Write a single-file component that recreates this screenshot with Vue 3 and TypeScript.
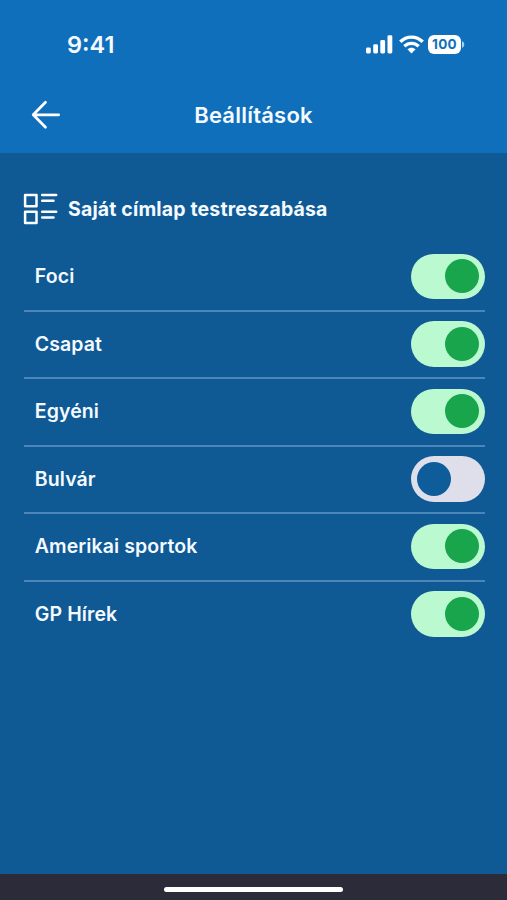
<script setup lang="ts">
import { ref } from 'vue'

interface Topic {
  name: string
  enabled: boolean
}

const topics = ref<Topic[]>([
  { name: 'Foci', enabled: true },
  { name: 'Csapat', enabled: true },
  { name: 'Egyéni', enabled: true },
  { name: 'Bulvár', enabled: false },
  { name: 'Amerikai sportok', enabled: true },
  { name: 'GP Hírek', enabled: true },
])
</script>

<template>
  <div class="screen">
    <header class="top">
      <div class="status">
        <span class="time">9:41</span>
        <div class="indicators">
          <svg class="signal" width="27" height="19" viewBox="0 0 27 19" fill="#fff">
            <rect x="0" y="12.5" width="4.8" height="6" rx="1.4" />
            <rect x="7.2" y="9.3" width="4.8" height="9.2" rx="1.4" />
            <rect x="14.3" y="5" width="4.8" height="13.5" rx="1.4" />
            <rect x="21.5" y="0.2" width="4.8" height="18.3" rx="1.4" />
          </svg>
          <svg class="wifi" width="25" height="19" viewBox="0 0 25 19" fill="none" stroke="#fff" stroke-width="3.4">
            <path d="M1.3 6.8C7.7 .5 17.3 .5 23.7 6.8" />
            <path d="M5.3 11.3C9.6 7.4 15.4 7.4 19.7 11.3" />
            <path d="M12.5 18.4L8.4 14.3C10.9 12.2 14.1 12.2 16.6 14.3Z" fill="#fff" stroke="none" />
          </svg>
          <div class="battery">100</div>
          <svg class="cap" width="3" height="7" viewBox="0 0 3 7" fill="#a9d0ef">
            <path d="M0 0C3 1.5 3 5.5 0 7Z" />
          </svg>
        </div>
      </div>
      <div class="nav">
        <button class="back" aria-label="Vissza">
          <svg width="30" height="30" viewBox="0 0 30 30" fill="none" stroke="#fff" stroke-width="2.7" stroke-linecap="round" stroke-linejoin="round">
            <path d="M27.7 14.8H2.2M14.5 2.2L2.2 14.8L14.5 27.3" />
          </svg>
        </button>
        <h1>Beállítások</h1>
      </div>
    </header>
    <main>
      <div class="heading">
        <svg width="35" height="32" viewBox="0 0 35 32" fill="none" stroke="#fff" stroke-width="2.5" stroke-linecap="round" stroke-linejoin="round">
          <path d="M1.1 1.9H12.5V13.2H1.1ZM1.1 18.7H12.5V30H1.1Z" />
          <path d="M18.2 2H32.2M18.2 7.7H29.5M18.2 18.7H32.2M18.2 24.5H29.5" />
        </svg>
        <h2>Saját címlap testreszabása</h2>
      </div>
      <ul>
        <li v-for="topic in topics" :key="topic.name">
          <span>{{ topic.name }}</span>
          <button
            class="toggle"
            :class="{ on: topic.enabled }"
            role="switch"
            :aria-checked="topic.enabled"
            :aria-label="topic.name"
            @click="topic.enabled = !topic.enabled"
          >
            <i></i>
          </button>
        </li>
      </ul>
    </main>
    <footer><div class="home"></div></footer>
  </div>
</template>

<style>
body {
  margin: 0;
}
</style>

<style scoped>
.screen {
  display: flex;
  flex-direction: column;
  width: 100%;
  height: 900px;
  box-sizing: border-box;
  overflow: hidden;
  background: #0f5995;
  color: #f4faff;
  font-family: Inter, "Liberation Sans", sans-serif;
}
button {
  border: 0;
  padding: 0;
  background: none;
  cursor: pointer;
}
svg {
  display: block;
  flex: none;
  overflow: visible;
}
.top {
  height: 153px;
  flex: none;
  background: #106fbb;
}
.status {
  display: flex;
  align-items: center;
  justify-content: space-between;
  height: 88px;
  padding: 0 42px 0 67px;
}
.time {
  font-size: 23.5px;
  font-weight: 600;
}
.indicators {
  display: flex;
  align-items: center;
}
.wifi {
  margin-left: 6px;
}
.battery {
  width: 33px;
  height: 19px;
  margin-left: 4px;
  border-radius: 6px;
  background: #fff;
  color: #106fbb;
  font-size: 13.5px;
  letter-spacing: 0.3px;
  font-weight: 700;
  line-height: 19px;
  text-align: center;
}
.cap {
  margin-left: 1px;
}
.nav {
  display: grid;
  grid-template-columns: 30px 1fr 30px;
  align-items: center;
  height: 54px;
  padding: 0 31px;
}
h1 {
  margin: 0;
  font-size: 22px;
  letter-spacing: 0.22px;
  font-weight: 600;
  text-align: center;
}
main {
  flex: 1;
  padding: 40px 22.5px 0 23.5px;
}
.heading {
  display: flex;
  align-items: center;
  gap: 9.5px;
  height: 32px;
}
h2 {
  margin: 0;
  font-size: 19.5px;
  letter-spacing: 0.15px;
  font-weight: 700;
  white-space: nowrap;
}
ul {
  list-style: none;
  margin: 19.3px 0 0;
  padding: 0;
}
li {
  display: flex;
  align-items: center;
  justify-content: space-between;
  box-sizing: border-box;
  height: 67.5px;
  padding: 0 0 1.5px 11.3px;
  border-bottom: 2px solid #4c86b8;
  font-size: 19.5px;
  letter-spacing: 0.09px;
  font-weight: 600;
}
li:last-child {
  border-color: transparent;
}
.toggle {
  display: flex;
  align-items: center;
  box-sizing: border-box;
  width: 73.5px;
  height: 45.5px;
  padding: 0 5.7px;
  border-radius: 23px;
  background: #dedfeb;
}
.toggle i {
  width: 34px;
  height: 34px;
  border-radius: 50%;
  background: #0f5c9b;
}
.toggle.on {
  justify-content: flex-end;
  background: #bbf9d0;
}
.toggle.on i {
  background: #18a54b;
}
footer {
  display: flex;
  justify-content: center;
  box-sizing: border-box;
  flex: none;
  height: 26.5px;
  padding-top: 13.5px;
  background: #2c2b3a;
}
.home {
  width: 179px;
  height: 5px;
  border-radius: 3px;
  background: #fff;
}
</style>
